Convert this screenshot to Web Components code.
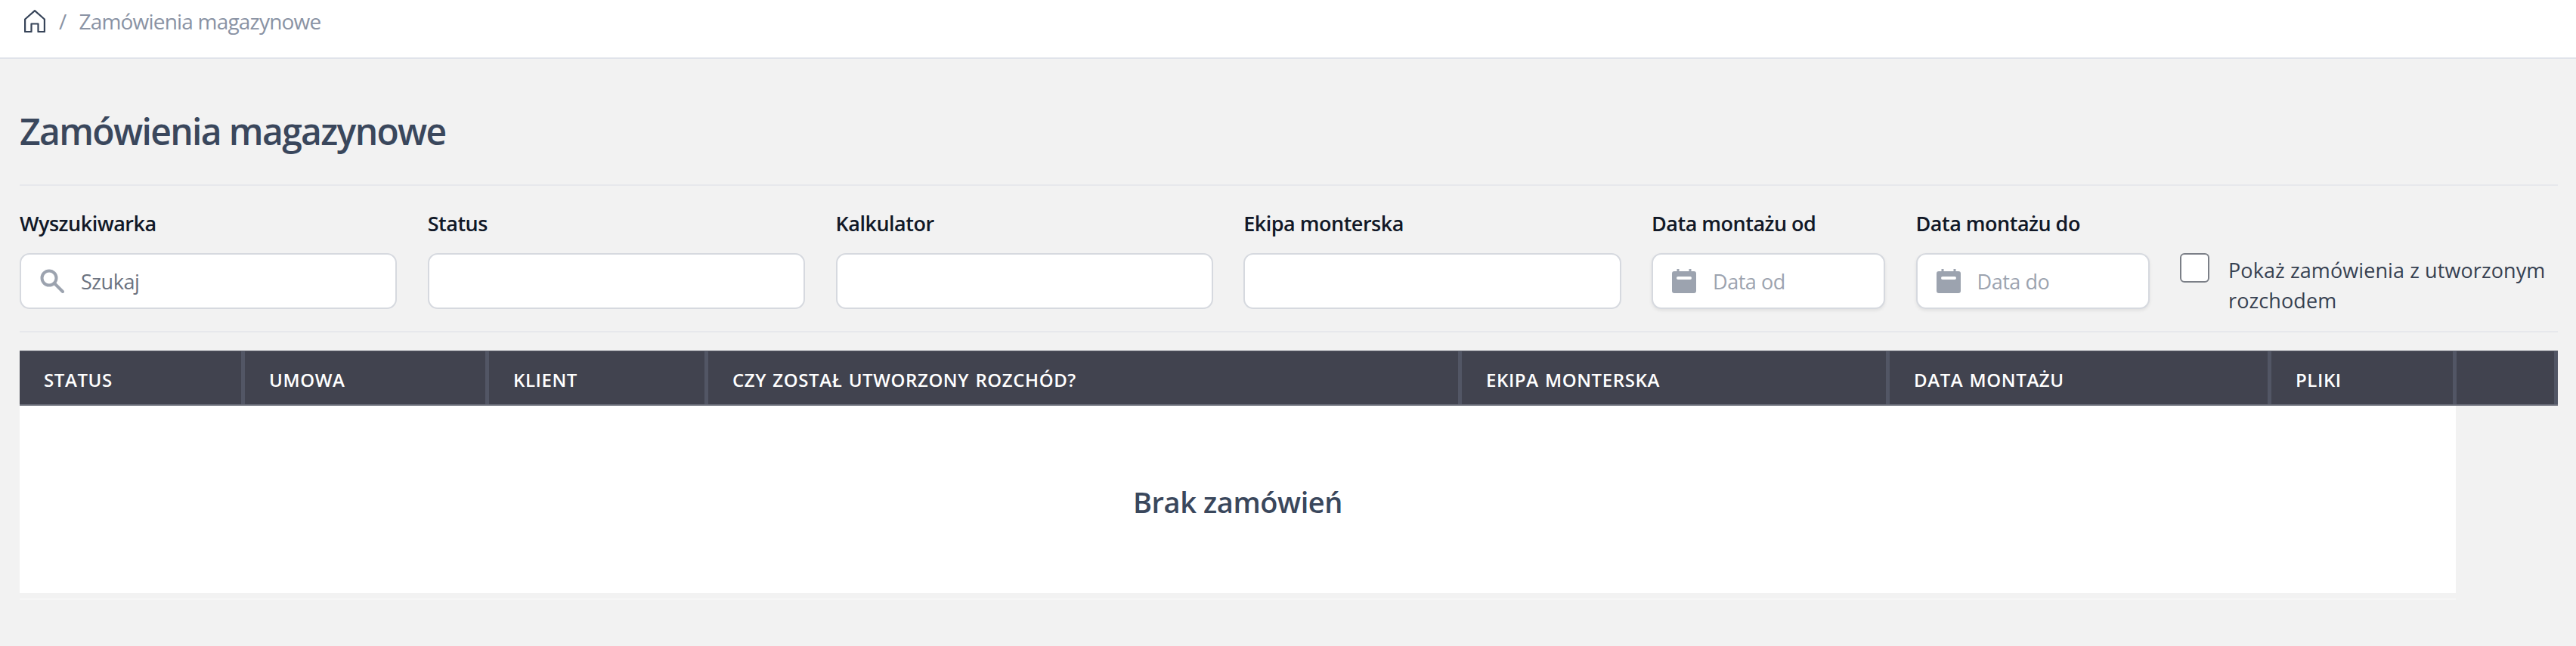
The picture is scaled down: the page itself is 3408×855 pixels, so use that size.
<!DOCTYPE html>
<html lang="pl"><head><meta charset="utf-8"><title>Zamówienia magazynowe</title>
<style>
html,body{margin:0;padding:0;background:#f2f2f2}
body{font-family:"Open Sans","Noto Sans","Liberation Sans",sans-serif;width:3408px;height:855px;overflow:hidden}
</style></head><body>
<app-breadcrumb>Zamówienia magazynowe</app-breadcrumb>
<orders-page>
  <page-title>Zamówienia magazynowe</page-title>
  <filter-bar>
    <filter-field label="Wyszukiwarka" icon="search" placeholder="Szukaj" width="499.25"></filter-field>
    <filter-field label="Status" width="499.25"></filter-field>
    <filter-field label="Kalkulator" width="499.25"></filter-field>
    <filter-field label="Ekipa monterska" width="499.25"></filter-field>
    <filter-field label="Data montażu od" icon="cal" placeholder="Data od" width="309"></filter-field>
    <filter-field label="Data montażu do" icon="cal" placeholder="Data do" width="309"></filter-field>
    <check-field>Pokaż zamówienia z utworzonym rozchodem</check-field>
  </filter-bar>
  <orders-table></orders-table>
</orders-page>
<script>
function def(name,html){customElements.define(name,class extends HTMLElement{constructor(){super();this.attachShadow({mode:'open'}).innerHTML=typeof html==='function'?html(this):html}})}
def('app-breadcrumb',`<style>
:host{display:flex;align-items:flex-start;height:76px;background:#fff;border-bottom:2px solid #e0e3ea;padding-left:32px;color:#8a93a4;font-size:28px;letter-spacing:-.8px}
svg{width:28px;height:30px;margin-top:13px;flex:none}
i{font-style:normal;margin:10px 17px 0 18px;line-height:36px}
span{margin-top:10px;line-height:36px}
</style><svg viewBox="0 0 28 30" fill="none" stroke="#374459" stroke-width="2.2" stroke-linejoin="round"><path d="M1.100 12.500 14 1.200l12.900 11.300V29H18.500V18.500h-9V29H1.100z"/></svg><i>/</i><span><slot></slot></span>`);
def('orders-page',`<style>:host{display:block;padding:0 24px 0 26px;box-sizing:border-box;width:3408px}</style><slot></slot>`);
def('page-title',`<style>:host{display:block;height:168px;box-sizing:border-box;padding-top:64px;border-bottom:2px solid #e7e8ec;color:#3a475c;font-size:48px;font-weight:550;line-height:64px;letter-spacing:-1.65px}</style><slot></slot>`);
def('filter-bar',`<style>:host{display:flex;height:194px;box-sizing:border-box;border-bottom:2px solid #e7e8ec;padding-top:32px;gap:40.5px}</style><slot></slot>`);
def('filter-field',h=>{
 const icons={search:`<svg width="32" height="32" viewBox="0 0 32 32" fill="none" stroke="#9ca3af" stroke-width="4"><circle cx="12" cy="12" r="9.500"/><path d="M19 19l11 11" stroke-linecap="round"/></svg>`,
 cal:`<svg width="32" height="32" viewBox="0 0 32 32"><path fill="#9ca3af" d="M6.500 0h3v3h13V0h3v3H29a3 3 0 0 1 3 3v23a3 3 0 0 1-3 3H3a3 3 0 0 1-3-3V6a3 3 0 0 1 3-3h3.500z"/><rect x="6" y="10" width="20" height="4" rx="2" fill="#fff"/></svg>`};
 const ic=h.getAttribute('icon'),w=h.getAttribute('width'),ph=h.getAttribute('placeholder')||'';
 return `<style>:host{display:block;width:${w}px;flex:none}
 label{display:block;height:37px;line-height:35px;margin-bottom:20px;color:#111827;font-size:27px;font-weight:550;letter-spacing:-.5px;white-space:nowrap}
 .b{display:flex;align-items:center;height:74px;box-sizing:border-box;background:#fff;border:2px solid #d6d9df;border-radius:13px;box-shadow:${ic==='cal'?'0 2px 4px rgba(0,0,0,.08)':'none'};color:${ic==='cal'?'#9ca3af':'#6b7280'};font-size:27px;letter-spacing:-.45px;padding-left:25px}
 svg{flex:none;margin-right:22px}</style>
 <label>${h.getAttribute('label')}</label><div class="b">${ic?icons[ic]:''}<span>${ph}</span></div>`});
def('check-field',`<style>:host{display:flex;flex:1;padding-top:57px;color:#374151;font-size:27px;letter-spacing:.1px;line-height:40px}
b{display:block;flex:none;width:39px;height:39px;box-sizing:border-box;background:#fff;border:2px solid #7b7f87;border-radius:6px;margin-right:25px}
span{display:block;padding-top:3px}</style><b></b><span><slot></slot></span>`);
def('orders-table',`<style>:host{display:block;margin-top:24px}
.h{display:grid;grid-template-columns:298px 323px 290px 997px 566px 505px 245px 134px;height:73px;background:#41434f;box-sizing:border-box;border-top:1px solid #555866;border-bottom:2px solid #6b6e7a}
.h div{display:flex;align-items:center;box-sizing:border-box;color:#fff;font-size:24px;font-weight:600;letter-spacing:.6px;word-spacing:1.5px;padding:5px 0 0 32px;border-right:5px solid #525665}
.b{width:3223px;height:248px;box-sizing:border-box;padding-top:6px;background:#fff;display:flex;align-items:center;justify-content:center;color:#3a475c;font-size:38px;font-weight:550;letter-spacing:-.4px}
.e{width:3223px;height:9px;box-sizing:border-box;border-bottom:2px solid #f6f6f6}</style>
<div class="h"><div>STATUS</div><div>UMOWA</div><div>KLIENT</div><div>CZY ZOSTAŁ UTWORZONY ROZCHÓD?</div><div>EKIPA MONTERSKA</div><div>DATA MONTAŻU</div><div>PLIKI</div><div></div></div>
<div class="b">Brak zamówień</div><div class="e"></div>`);
</script>
</body></html>
